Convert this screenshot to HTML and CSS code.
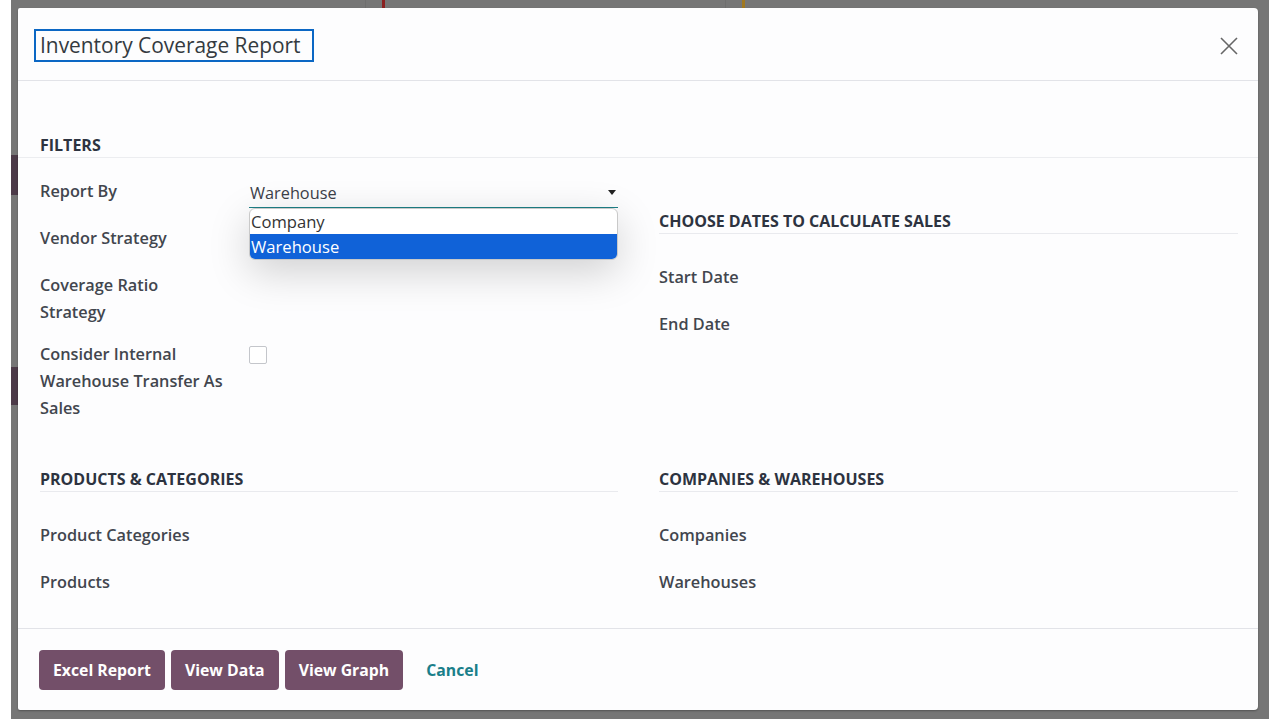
FILE: index.html
```html
<!DOCTYPE html>
<html lang="en">
<head>
    <meta charset="UTF-8">
    <meta name="viewport" content="width=device-width, initial-scale=1.0">
    <title>Inventory Coverage Report</title>
    <link rel="stylesheet" href="styles.css">
</head>
<body>
    <div class="screen">
        <div class="modal">
            <div class="modal-header">
                <h4 class="modal-title">Inventory Coverage Report</h4>
                <button class="btn-close" aria-label="Close">
                    <svg width="20" height="20" viewBox="0 0 20 20">
                        <path d="M2 2 L18 18 M18 2 L2 18" stroke="#666" stroke-width="1.6" fill="none"/>
                    </svg>
                </button>
            </div>

            <div class="modal-body">
                <div class="separator">FILTERS</div>

                <div class="columns">
                    <div class="group">
                        <div class="row">
                            <label class="label">Report By</label>
                            <div class="field">
                                <div class="select">
                                    <span>Warehouse</span>
                                    <span class="caret"></span>
                                </div>
                                <ul class="options">
                                    <li>Company</li>
                                    <li class="selected">Warehouse</li>
                                </ul>
                            </div>
                        </div>
                        <div class="row">
                            <label class="label">Vendor Strategy</label>
                            <div class="field"></div>
                        </div>
                        <div class="row">
                            <label class="label">Coverage Ratio<br>Strategy</label>
                            <div class="field"></div>
                        </div>
                        <div class="row">
                            <label class="label">Consider Internal<br>Warehouse Transfer As<br>Sales</label>
                            <div class="field">
                                <span class="checkbox"></span>
                            </div>
                        </div>
                    </div>

                    <div class="group group-dates">
                        <div class="group-title">CHOOSE DATES TO CALCULATE SALES</div>
                        <div class="row">
                            <label class="label">Start Date</label>
                            <div class="field"></div>
                        </div>
                        <div class="row">
                            <label class="label">End Date</label>
                            <div class="field"></div>
                        </div>
                    </div>
                </div>

                <div class="columns columns-lower">
                    <div class="group">
                        <div class="group-title">PRODUCTS &amp; CATEGORIES</div>
                        <div class="row">
                            <label class="label">Product Categories</label>
                            <div class="field"></div>
                        </div>
                        <div class="row">
                            <label class="label">Products</label>
                            <div class="field"></div>
                        </div>
                    </div>
                    <div class="group">
                        <div class="group-title">COMPANIES &amp; WAREHOUSES</div>
                        <div class="row">
                            <label class="label">Companies</label>
                            <div class="field"></div>
                        </div>
                        <div class="row">
                            <label class="label">Warehouses</label>
                            <div class="field"></div>
                        </div>
                    </div>
                </div>
            </div>

            <div class="modal-footer">
                <button class="btn btn-primary">Excel Report</button>
                <button class="btn btn-primary">View Data</button>
                <button class="btn btn-primary">View Graph</button>
                <button class="btn btn-link">Cancel</button>
            </div>
        </div>
    </div>
</body>
</html>
```

FILE: styles.css
```css
body {
    margin: 0;
    background-color: #fff;
    font-family: "Open Sans", "Noto Sans", sans-serif;
    color: #3a3f47;
}

/* grey backdrop with bits of the page behind it */
.screen {
    margin-left: 11px;
    width: 1258px;
    height: 719px;
    box-sizing: border-box;
    padding: 8px 11px 9px 7px;
    background-color: #767676;
    background-image:
        linear-gradient(#4c3a48, #4c3a48),
        linear-gradient(#4c3a48, #4c3a48),
        linear-gradient(#8a2020, #8a2020),
        linear-gradient(#a07820, #a07820),
        linear-gradient(#6e6e6e, #6e6e6e),
        linear-gradient(#6e6e6e, #6e6e6e);
    background-size: 7px 40px, 7px 38px, 3px 8px, 3px 8px, 1px 8px, 1px 8px;
    background-position: 0 155px, 0 367px, 371px 0, 731px 0, 354px 0, 714px 0;
    background-repeat: no-repeat;
}

.modal {
    height: 100%;
    display: flex;
    flex-direction: column;
    background-color: #fdfdfe;
    border-radius: 2px 4px 4px 2px;
    box-shadow: 0 1px 2px rgba(0, 0, 0, 0.3);
}

.modal-header {
    height: 72px;
    display: flex;
    align-items: flex-start;
    justify-content: space-between;
    padding: 0 19px 0 16px;
    border-bottom: 1px solid #e2e3e8;
}

.modal-title {
    margin: 21px 0 0 0;
    height: 29px;
    padding: 0 11px 0 4px;
    border: 2px solid #0b67c4;
    font-size: 20.9px;
    font-weight: 400;
    line-height: 29px;
    color: #343a40;
}

.btn-close {
    margin-top: 28px;
    padding: 0;
    border: none;
    background: none;
    cursor: pointer;
}

.modal-body {
    flex: 1;
    padding-top: 52px;
}

.separator {
    padding-left: 22px;
    line-height: 24px;
    font-size: 16px;
    font-weight: 700;
    color: #2d3340;
    border-bottom: 1px solid #ecedf0;
}

.columns {
    display: grid;
    grid-template-columns: 578px 579px;
    column-gap: 41px;
    padding: 20px 20px 0 22px;
}

.columns-lower {
    padding-top: 30px;
}

.group-dates {
    padding-top: 31px;
}

.group-title {
    line-height: 24px;
    font-size: 16px;
    font-weight: 700;
    color: #2d3340;
    border-bottom: 1px solid #e9eaee;
    margin-bottom: 30px;
}

.row {
    display: grid;
    grid-template-columns: 209px 1fr;
    padding-bottom: 15px;
}

.label {
    min-height: 32px;
    line-height: 27px;
    font-size: 16.3px;
    font-weight: 600;
    color: #42464e;
}

.field {
    position: relative;
}

.select {
    display: flex;
    justify-content: space-between;
    align-items: center;
    height: 29px;
    padding: 0 1px;
    border-bottom: 1px solid #1d7f86;
    font-size: 16.3px;
    color: #3c4049;
}

.caret {
    width: 0;
    height: 0;
    margin-right: 1px;
    border-left: 4px solid transparent;
    border-right: 4px solid transparent;
    border-top: 5px solid #222;
}

/* open list of the select */
.options {
    position: absolute;
    top: 30px;
    left: 0;
    right: 0;
    margin: 0;
    padding: 0;
    list-style: none;
    background-color: #fff;
    border: 1px solid #c9c9c9;
    border-radius: 6px;
    overflow: hidden;
    box-shadow: 0 12px 40px rgba(0, 0, 0, 0.18);
    font-size: 16.6px;
    color: #333;
}

.options li {
    height: 25px;
    line-height: 25px;
    padding-left: 1px;
}

.options .selected {
    background-color: #1062d8;
    color: #fff;
}

.checkbox {
    display: block;
    width: 16px;
    height: 16px;
    margin-top: 5px;
    border: 1px solid #c4c6cb;
    border-radius: 2px;
    background-color: #fff;
}

.modal-footer {
    height: 82px;
    box-sizing: border-box;
    display: flex;
    align-items: flex-start;
    gap: 6px;
    padding: 21px 21px 0 21px;
    border-top: 1px solid #e2e3e8;
}

.btn {
    height: 40px;
    padding: 0 14px;
    border: none;
    border-radius: 4px;
    font-family: inherit;
    font-size: 15.8px;
    font-weight: 700;
    cursor: pointer;
}

.btn-primary {
    background-color: #734f69;
    color: #fff;
}

.btn-link {
    margin-left: 3px;
    background: none;
    color: #1a7f8a;
}
```
